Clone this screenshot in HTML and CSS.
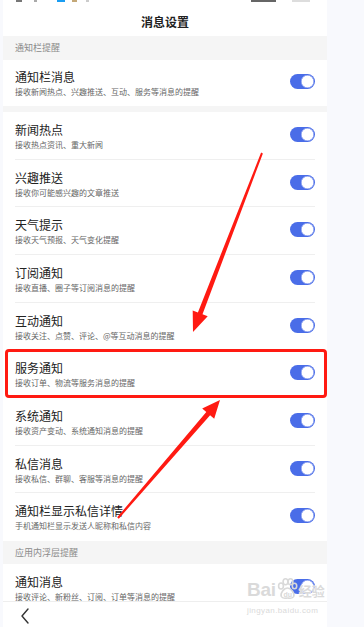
FILE: index.html
```html
<!DOCTYPE html>
<html lang="zh-CN">
<head>
<meta charset="utf-8">
<title>消息设置</title>
<link rel="stylesheet" href="styles.css">
</head>
<body>
<div class="screen">
  <div class="content">
    <header class="topbar">
      <div class="status">
        <span class="sb sb1"></span><span class="sb sb2"></span><span class="sb sb3"></span><span class="sb sb4"></span><span class="sb sb5"></span>
        <span class="sb-fill"></span>
        <span class="sb sb6"></span><span class="sb sb7"></span>
      </div>
      <h1 class="title">消息设置</h1>
    </header>

    <div class="section-title">通知栏提醒</div>
    <div class="group">
      <div class="row first">
        <div class="text"><div class="t">通知栏消息</div><div class="s">接收新闻热点、兴趣推送、互动、服务等消息的提醒</div></div>
        <span class="toggle"></span>
      </div>
    </div>

    <div class="gap"></div>

    <div class="group list">
      <div class="row"><div class="text"><div class="t">新闻热点</div><div class="s">接收热点资讯、重大新闻</div></div><span class="toggle"></span></div>
      <div class="row"><div class="text"><div class="t">兴趣推送</div><div class="s">接收你可能感兴趣的文章推送</div></div><span class="toggle"></span></div>
      <div class="row"><div class="text"><div class="t">天气提示</div><div class="s">接收天气预报、天气变化提醒</div></div><span class="toggle"></span></div>
      <div class="row"><div class="text"><div class="t">订阅通知</div><div class="s">接收直播、圈子等订阅消息的提醒</div></div><span class="toggle"></span></div>
      <div class="row"><div class="text"><div class="t">互动通知</div><div class="s">接收关注、点赞、评论、@等互动消息的提醒</div></div><span class="toggle"></span></div>
      <div class="row highlight"><div class="text"><div class="t">服务通知</div><div class="s">接收订单、物流等服务消息的提醒</div></div><span class="toggle"></span></div>
      <div class="row"><div class="text"><div class="t">系统通知</div><div class="s">接收资产变动、系统通知消息的提醒</div></div><span class="toggle"></span></div>
      <div class="row"><div class="text"><div class="t">私信消息</div><div class="s">接收私信、群聊、客服等消息的提醒</div></div><span class="toggle"></span></div>
      <div class="row"><div class="text"><div class="t">通知栏显示私信详情</div><div class="s">手机通知栏显示发送人昵称和私信内容</div></div><span class="toggle"></span></div>
    </div>

    <div class="section-title second">应用内浮层提醒</div>
    <div class="group">
      <div class="row"><div class="text"><div class="t">通知消息</div><div class="s">接收评论、新粉丝、订阅、订单等消息的提醒</div></div><span class="toggle"></span></div>
    </div>
  </div>

  <nav class="bottombar">
    <svg class="back" width="10" height="16" viewBox="0 0 10 16"><polyline points="8,1 2,8 8,15" fill="none" stroke="#333" stroke-width="1.4" stroke-linejoin="round" stroke-linecap="round"/></svg>
  </nav>
</div>

<div class="watermark">
  <div class="wm-logo"><span class="wm-bai">Bai</span><svg class="paw" width="21" height="22" viewBox="0 0 21 22"><g fill="none" stroke="#d9d9d9" stroke-width="1.6"><ellipse cx="4" cy="8" rx="2.4" ry="3"/><ellipse cx="8.5" cy="3.8" rx="2.4" ry="3"/><ellipse cx="13.5" cy="3.8" rx="2.4" ry="3"/><ellipse cx="17.5" cy="8" rx="2.2" ry="2.8"/><path d="M10.5 10c3.5 0 7.5 5 6.2 8.5-1.2 2.6-4.3 1.5-6.2 1.5s-5 1.1-6.2-1.5C3 15 7 10 10.5 10z"/></g><text x="10.7" y="18.8" text-anchor="middle" font-size="7" font-weight="700" fill="#d9d9d9" font-family="Liberation Sans, sans-serif">du</text></svg><span class="wm-cn">经验</span></div>
  <div class="wm-url">jingyan.baidu.com</div>
</div>

<svg class="arrows" width="364" height="627" viewBox="0 0 364 627">
  <polygon fill="#ff1a12" points="261.1,152.6 197.9,312.4 192.7,310.4 193,332 207.7,316.2 202.5,314.2 262.9,153.4"/>
  <polygon fill="#ff1a12" points="117.2,517.3 206.3,412.0 202.2,408.4 220,400 214.2,418.8 210.1,415.2 118.8,518.7"/>
</svg>
</body>
</html>
```

FILE: styles.css
```css
* { box-sizing: border-box; }
html, body { margin: 0; padding: 0; }
body {
  width: 364px;
  height: 627px;
  overflow: hidden;
  background: #f8f9fd;
  font-family: "Noto Sans CJK SC", "Noto Sans", "Liberation Sans", sans-serif;
  color: #222;
  position: relative;
}
.screen {
  width: 324px;
  height: 627px;
  margin-left: 3px;
  background: #fff;
  display: flex;
  flex-direction: column;
}
.content {
  height: 601px;
  overflow: hidden;
  flex: none;
}
.topbar {
  height: 36px;
  background: #fff;
}
.status {
  height: 2px;
  display: flex;
  align-items: flex-start;
}
.sb { display: block; height: 2px; }
.sb1 { width: 6px; margin-left: 13px; background: #777; }
.sb2 { width: 3px; margin-left: 12px; background: #aaa; }
.sb3 { width: 8px; margin-left: 20px; background: #1a9df2; }
.sb4 { width: 5px; margin-left: 7px; background: #c4a878; }
.sb5 { width: 3px; margin-left: 9px; background: #ccc; }
.sb-fill { flex: 1; }
.sb6 { width: 25px; background: #666; }
.sb7 { width: 18px; margin-left: 16px; margin-right: 17px; background: #ddd; }
.title {
  margin: 0;
  padding-top: 12px;
  font-size: 12px;
  line-height: 16px;
  font-weight: 700;
  text-align: center;
  color: #222;
}
.section-title {
  height: 24px;
  background: #f5f5f5;
  padding-left: 12px;
  font-size: 9px;
  line-height: 24px;
  color: #8a8a8a;
}
.section-title.second { height: 23px; line-height: 23px; }
.gap { height: 6px; background: #f5f5f5; }
.group { background: #fff; }
.row {
  margin: 0 12px;
  height: 47.67px;
  display: flex;
  align-items: flex-start;
  justify-content: space-between;
  padding-top: 10px;
  position: relative;
}
.row.first { height: 46px; padding-top: 9px; }
.list .row { border-bottom: 1px solid #efefef; }
.list .row:last-child { border-bottom: none; }
.text { display: flex; flex-direction: column; }
.t {
  font-size: 12px;
  line-height: 16px;
  color: #222;
}
.s {
  margin-top: 1px;
  font-size: 8px;
  line-height: 12px;
  color: #666;
  white-space: nowrap;
}
.toggle {
  margin-top: 5px;
  width: 25px;
  height: 15px;
  border-radius: 8px;
  background: #4a6de8;
  position: relative;
  flex: none;
}
.toggle::after {
  content: "";
  position: absolute;
  right: 1px;
  top: 1px;
  width: 13px;
  height: 13px;
  border-radius: 50%;
  background: #fff;
  box-shadow: 0 0 0 0.6px #6d88ec inset;
}
.row.highlight::after {
  content: "";
  position: absolute;
  left: -10px;
  right: -12px;
  top: -1px;
  bottom: -1px;
  border: 3px solid #ff1a12;
  border-radius: 4px;
}
.bottombar {
  height: 26px;
  border-top: 1px solid #eee;
  background: #fff;
  display: flex;
  align-items: center;
  padding-left: 17px;
  flex: none;
}
.back { display: block; margin-top: 2px; }
.arrows {
  position: absolute;
  left: 0;
  top: 0;
  pointer-events: none;
}
.watermark {
  position: absolute;
  left: 247px;
  top: 577px;
  width: 90px;
  color: #dadada;
  pointer-events: none;
  font-family: "Liberation Sans", "Noto Sans CJK SC", sans-serif;
  text-shadow: 0 0 1px #fff, 0 0 1px #fff;
}
.wm-logo {
  display: flex;
  align-items: flex-end;
  height: 24px;
}
.wm-bai {
  font-size: 19px;
  line-height: 22px;
  font-weight: 700;
  letter-spacing: -0.3px;
}
.paw { display: block; margin: 0 0 1px 1px; }
.wm-cn {
  margin-left: 1px;
  font-family: "Noto Sans CJK SC", sans-serif;
  font-size: 13px;
  line-height: 20px;
  font-weight: 700;
}
.wm-url {
  font-size: 8px;
  line-height: 10px;
  margin-top: 5px;
  letter-spacing: 0.4px;
}
```
